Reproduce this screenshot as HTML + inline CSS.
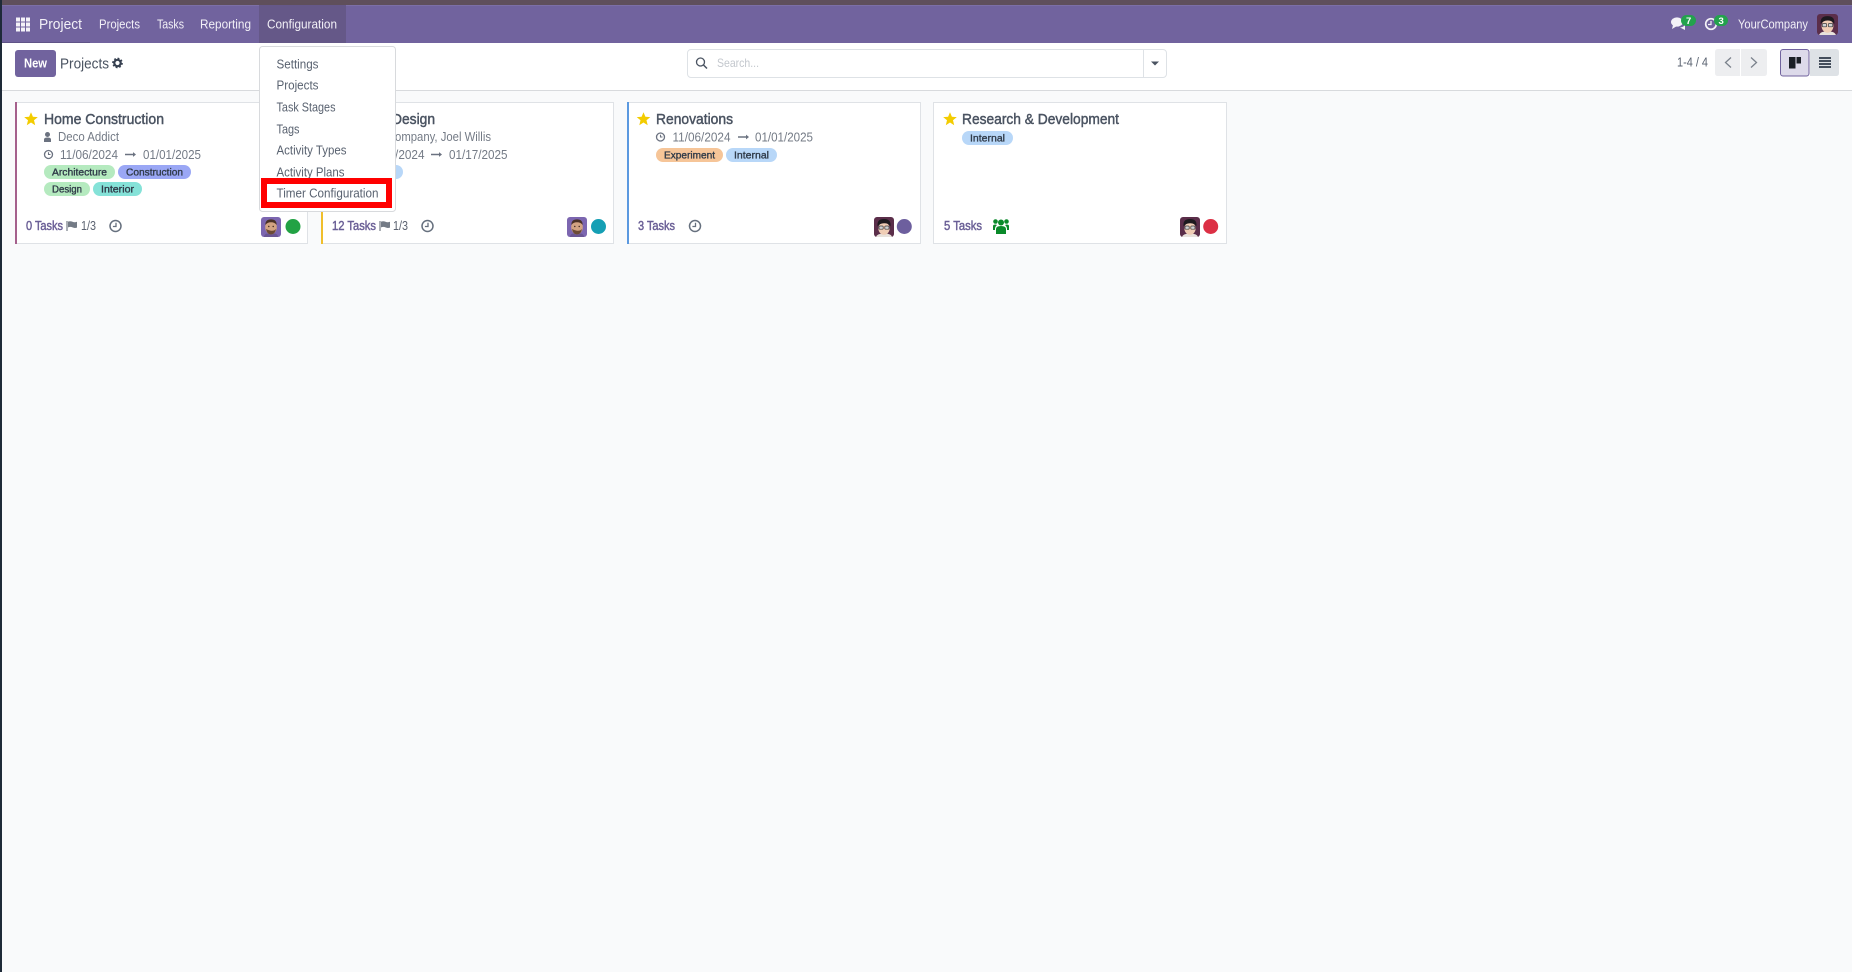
<!DOCTYPE html>
<html><head><meta charset="utf-8"><title>Project</title>
<style>
html,body{margin:0;padding:0;background:#f9fafb;width:1852px;height:972px;overflow:hidden}
svg{display:block}
text{font-family:"Liberation Sans",sans-serif;font-size:12.5px}
.nav{fill:#f2f0f7;font-size:13px}
.mi{fill:#596270;font-size:12.5px}
.t{fill:#4a5361;color:#4a5361;font-size:14.5px;stroke:currentColor;stroke-width:.45px}
.s{fill:#747b86;font-size:12.5px}
.tag{fill:#2f3a48;color:#2f3a48;font-size:10.5px;stroke:currentColor;stroke-width:.35px}
.f{fill:#6a5f96;color:#6a5f96;font-size:12.5px;stroke:currentColor;stroke-width:.45px}
</style></head><body>
<svg width="1852" height="972" viewBox="0 0 1852 972" xmlns="http://www.w3.org/2000/svg">
<defs>
<g id="star"><polygon points="0,-6.8 1.9,-2.2 6.8,-1.9 3,1.3 4.2,6.2 0,3.5 -4.2,6.2 -3,1.3 -6.8,-1.9 -1.9,-2.2" fill="#f3cc00"/></g>
<g id="clk"><circle cx="0" cy="0" r="4" fill="none" stroke="#6b7280" stroke-width="1.3"/><path d="M0-2.2V0H2" fill="none" stroke="#6b7280" stroke-width="1.1"/></g>
<g id="bigclk"><circle cx="0" cy="0" r="5.500" fill="none" stroke="#66707e" stroke-width="1.500"/><path d="M.5-3.200V.5H-2.600" fill="none" stroke="#66707e" stroke-width="1.300"/></g>
<g id="arr"><path d="M0 0H9" stroke="#6b7280" stroke-width="1.500"/><path d="M8 -2.400L11 0L8 2.400Z" fill="#6b7280"/></g>
<g id="flag"><path d="M0-5V5" stroke="#747b86" stroke-width="1.200"/><path d="M1-4.400Q3.500-5.200 5.500-4.200T10-4.200V1.600Q7.500 2.400 5.500 1.400T1 1.400Z" fill="#747b86"/></g>
<g id="av1"><rect width="20" height="20" rx="3" fill="#7c66b0"/><path d="M3 20Q3 16 10 16T17 20Z" fill="#6a5694"/><ellipse cx="10" cy="10" rx="5.800" ry="7.400" fill="#d3a482"/><path d="M4.400 8Q4.200 2.400 10 2.400T15.600 8Q14 5.200 10 5.200T4.400 8Z" fill="#4a3226"/><path d="M5 12Q6 17.500 10 17.500T15 12Q13 14.200 10 13.700T5 12Z" fill="#6b4a36"/><circle cx="7.800" cy="9.500" r=".7" fill="#33221a"/><circle cx="12.200" cy="9.500" r=".7" fill="#33221a"/></g>
<g id="av2"><rect width="20" height="20" rx="3" fill="#5b2e4a"/><path d="M2 20Q3 16.500 10 16.500T18 20Z" fill="#e8e2dc"/><ellipse cx="10" cy="11.500" rx="5.600" ry="6.300" fill="#f0cdb5"/><path d="M3.600 9.500Q2.500 2 10 2T16.400 9.500Q14.500 6 10 6.200T3.600 9.500Z" fill="#1d1a1f"/><rect x="5" y="9" width="4.200" height="3.200" rx="1" fill="#cfd2d4" stroke="#3a3a3a" stroke-width=".7"/><rect x="10.800" y="9" width="4.200" height="3.200" rx="1" fill="#cfd2d4" stroke="#3a3a3a" stroke-width=".7"/></g>
</defs>

<!-- backgrounds -->
<rect width="1852" height="972" fill="#f9fafb"/>
<rect width="1852" height="5" fill="#5f4f5b"/>
<rect y="5" width="1852" height="38" fill="#71639e"/>
<rect y="5" width="1852" height="1" fill="#7c6fa6"/>
<rect x="2" y="42" width="88" height="1" fill="#5f5387"/>
<rect x="259" y="5" width="87" height="38" fill="#655888"/>
<rect y="43" width="1852" height="47" fill="#fff"/>
<rect y="90" width="1852" height="1" fill="#d8dadd"/>
<rect width="2" height="972" fill="#1e2a38"/>

<!-- navbar -->
<g fill="#f4f2f8">
<rect x="16" y="17.500" width="4" height="4"/><rect x="21" y="17.500" width="4" height="4"/><rect x="26" y="17.500" width="4" height="4"/>
<rect x="16" y="22.500" width="4" height="4"/><rect x="21" y="22.500" width="4" height="4"/><rect x="26" y="22.500" width="4" height="4"/>
<rect x="16" y="27.500" width="4" height="4"/><rect x="21" y="27.500" width="4" height="4"/><rect x="26" y="27.500" width="4" height="4"/>
</g>
<text x="39" y="29" class="nav" style="font-size:14.500px" textLength="43" lengthAdjust="spacingAndGlyphs">Project</text>
<text x="99" y="28.500" class="nav" textLength="41" lengthAdjust="spacingAndGlyphs">Projects</text>
<text x="157" y="28.500" class="nav" textLength="27" lengthAdjust="spacingAndGlyphs">Tasks</text>
<text x="200" y="28.500" class="nav" textLength="51" lengthAdjust="spacingAndGlyphs">Reporting</text>
<text x="267" y="28.500" class="nav" textLength="70" lengthAdjust="spacingAndGlyphs">Configuration</text>

<!-- systray -->
<g fill="#f4f2f8">
<ellipse cx="1677" cy="22" rx="6" ry="4.600"/><path d="M1673 25L1672 29L1677 26Z"/>
<path d="M1680 27.500Q1684.500 27 1685 24L1685 28L1685 30L1682 28.500Z"/>
</g>
<rect x="1681" y="15" width="15" height="11" rx="5.500" fill="#23a24d"/>
<text x="1686" y="24" style="font-size:9.500px;font-weight:bold" fill="#fff">7</text>
<circle cx="1711" cy="24" r="5.300" fill="none" stroke="#f4f2f8" stroke-width="1.700"/><path d="M1711 21V24.500H1708" fill="none" stroke="#f4f2f8" stroke-width="1.200"/>
<rect x="1714" y="15" width="14" height="11" rx="5.500" fill="#23a24d"/>
<text x="1718.500" y="24" style="font-size:9.500px;font-weight:bold" fill="#fff">3</text>
<text x="1738" y="28.500" class="nav" textLength="70" lengthAdjust="spacingAndGlyphs" style="font-size:12.500px">YourCompany</text>
<use href="#av2" transform="translate(1817 14) scale(1.05)"/>

<!-- control panel -->
<rect x="15" y="50" width="41" height="27" rx="3" fill="#71639e"/>
<text x="24" y="67.500" fill="#fff" style="font-size:12.500px;font-weight:bold" textLength="23" lengthAdjust="spacingAndGlyphs">New</text>
<text x="60" y="68.500" fill="#4a5361" style="font-size:15px" textLength="49" lengthAdjust="spacingAndGlyphs">Projects</text>
<circle cx="117.500" cy="63" r="3.200" fill="none" stroke="#374151" stroke-width="2.200"/>
<circle cx="117.500" cy="63" r="4.600" fill="none" stroke="#374151" stroke-width="1.500" stroke-dasharray="1.800 1.800"/>

<!-- search -->
<rect x="687.500" y="49.500" width="479" height="28" rx="3.500" fill="#fff" stroke="#dee2e6"/>
<path d="M1143.500 50V77" stroke="#dee2e6"/>
<circle cx="700.500" cy="62" r="4" fill="none" stroke="#4a5361" stroke-width="1.300"/><path d="M703.500 65L707 68.500" stroke="#4a5361" stroke-width="1.500"/>
<text x="717" y="67" fill="#c3c7cd" style="font-size:12px" textLength="42" lengthAdjust="spacingAndGlyphs">Search...</text>
<path d="M1151 61.500H1159L1155 65.500Z" fill="#4a5361"/>

<!-- pager -->
<text x="1677" y="66.500" fill="#596270" style="font-size:12.500px" textLength="31" lengthAdjust="spacingAndGlyphs">1-4 / 4</text>
<path d="M1718 49H1740V76H1718Q1715 76 1715 73V52Q1715 49 1718 49Z" fill="#edeef0"/>
<path d="M1741 49H1764Q1767 49 1767 52V73Q1767 76 1764 76H1741Z" fill="#edeef0"/>
<path d="M1731 57.500L1725.500 62.500L1731 67.500" fill="none" stroke="#7b828c" stroke-width="1.300"/>
<path d="M1751 57.500L1756.500 62.500L1751 67.500" fill="none" stroke="#7b828c" stroke-width="1.300"/>
<rect x="1780.500" y="49.500" width="28.500" height="26.500" rx="2.500" fill="#dddaea" stroke="#71639e"/>
<rect x="1789" y="57" width="6.500" height="11.500" fill="#1b1f27"/><rect x="1796.500" y="57" width="4.500" height="6.500" fill="#1b1f27"/>
<path d="M1810 49H1836Q1839 49 1839 52V73Q1839 76 1836 76H1810Z" fill="#dee2e6"/>
<path d="M1819 58H1831M1819 61H1831M1819 64H1831M1819 67H1831" stroke="#2f3a48" stroke-width="1.800"/>

<!-- card 1 -->
<rect x="15.500" y="102.500" width="292" height="141" fill="#fff" stroke="#dfe2e6"/>
<rect x="15" y="102" width="2" height="142" fill="#a5608c"/>
<use href="#star" x="31" y="119"/>
<text x="44" y="124" class="t" textLength="120" lengthAdjust="spacingAndGlyphs">Home Construction</text>
<circle cx="47.500" cy="134.500" r="2.500" fill="#6b7280"/><path d="M44 142V139.500Q44 137.500 47.500 137.500T51 139.500V142Z" fill="#6b7280"/>
<text x="58" y="141" class="s" textLength="61" lengthAdjust="spacingAndGlyphs">Deco Addict</text>
<use href="#clk" x="48.500" y="154.500"/>
<text x="60" y="159" class="s" textLength="58" lengthAdjust="spacingAndGlyphs">11/06/2024</text>
<use href="#arr" x="125" y="154.500"/>
<text x="143" y="159" class="s" textLength="58" lengthAdjust="spacingAndGlyphs">01/01/2025</text>
<rect x="44" y="165" width="71" height="14" rx="7" fill="#b5eabf"/>
<text x="52" y="175.500" class="tag" textLength="55" lengthAdjust="spacingAndGlyphs">Architecture</text>
<rect x="118" y="165" width="73" height="14" rx="7" fill="#9aa7f5"/>
<text x="126" y="175.500" class="tag" textLength="57" lengthAdjust="spacingAndGlyphs">Construction</text>
<rect x="44" y="182" width="46" height="14" rx="7" fill="#b5eabf"/>
<text x="52" y="192.500" class="tag" textLength="30" lengthAdjust="spacingAndGlyphs">Design</text>
<rect x="93" y="182" width="49" height="14" rx="7" fill="#85e2d8"/>
<text x="101" y="192.500" class="tag" textLength="33" lengthAdjust="spacingAndGlyphs">Interior</text>
<text x="26" y="230" class="f" textLength="37" lengthAdjust="spacingAndGlyphs">0 Tasks</text>
<use href="#flag" x="67" y="226"/>
<text x="81" y="230" class="s" style="fill:#5b6270" textLength="15" lengthAdjust="spacingAndGlyphs">1/3</text>
<use href="#bigclk" x="115.500" y="226"/>
<use href="#av1" x="261" y="217"/>
<circle cx="293" cy="226.500" r="7.500" fill="#22a244"/>

<!-- card 2 -->
<rect x="321.500" y="102.500" width="292" height="141" fill="#fff" stroke="#dfe2e6"/>
<rect x="321" y="102" width="2" height="142" fill="#f0bf2c"/>
<text x="392" y="124" class="t" textLength="43" lengthAdjust="spacingAndGlyphs">Design</text>
<text x="364" y="141" class="s" textLength="127" lengthAdjust="spacingAndGlyphs">YourCompany, Joel Willis</text>
<text x="366.500" y="159" class="s" textLength="58" lengthAdjust="spacingAndGlyphs">11/06/2024</text>
<use href="#arr" x="431" y="154.500"/>
<text x="449" y="159" class="s" textLength="58.500" lengthAdjust="spacingAndGlyphs">01/17/2025</text>
<rect x="350" y="165" width="53" height="14" rx="7" fill="#b8d7f8"/>
<text x="332" y="230" class="f" textLength="44" lengthAdjust="spacingAndGlyphs">12 Tasks</text>
<use href="#flag" x="380" y="226"/>
<text x="393" y="230" class="s" style="fill:#5b6270" textLength="15" lengthAdjust="spacingAndGlyphs">1/3</text>
<use href="#bigclk" x="427.500" y="226"/>
<use href="#av1" x="567" y="217"/>
<circle cx="598.500" cy="226.500" r="7.500" fill="#159fb4"/>

<!-- card 3 -->
<rect x="627.500" y="102.500" width="293" height="141" fill="#fff" stroke="#dfe2e6"/>
<rect x="627" y="102" width="2" height="142" fill="#5b99e0"/>
<use href="#star" x="643.500" y="119"/>
<text x="656" y="124" class="t" textLength="77" lengthAdjust="spacingAndGlyphs">Renovations</text>
<use href="#clk" x="660.500" y="137"/>
<text x="672.500" y="141.500" class="s" textLength="58" lengthAdjust="spacingAndGlyphs">11/06/2024</text>
<use href="#arr" x="738" y="137"/>
<text x="755" y="141.500" class="s" textLength="58" lengthAdjust="spacingAndGlyphs">01/01/2025</text>
<rect x="656" y="148" width="67" height="14" rx="7" fill="#f6c598"/>
<text x="664" y="158.500" class="tag" textLength="51" lengthAdjust="spacingAndGlyphs">Experiment</text>
<rect x="726" y="148" width="51" height="14" rx="7" fill="#b8d7f8"/>
<text x="734" y="158.500" class="tag" textLength="35" lengthAdjust="spacingAndGlyphs">Internal</text>
<text x="638" y="230" class="f" textLength="37" lengthAdjust="spacingAndGlyphs">3 Tasks</text>
<use href="#bigclk" x="695" y="226"/>
<use href="#av2" x="874" y="217"/>
<circle cx="904.300" cy="226.500" r="7.500" fill="#6d5f9e"/>

<!-- card 4 -->
<rect x="933.500" y="102.500" width="293" height="141" fill="#fff" stroke="#dfe2e6"/>
<use href="#star" x="950" y="119"/>
<text x="962" y="124" class="t" textLength="157" lengthAdjust="spacingAndGlyphs">Research &amp; Development</text>
<rect x="962" y="131" width="51" height="14" rx="7" fill="#b8d7f8"/>
<text x="970" y="141.500" class="tag" textLength="35" lengthAdjust="spacingAndGlyphs">Internal</text>
<text x="944" y="230" class="f" textLength="38" lengthAdjust="spacingAndGlyphs">5 Tasks</text>
<g fill="#0a8a2a">
<circle cx="1001" cy="222.500" r="3"/><circle cx="995.500" cy="221.500" r="2.300"/><circle cx="1006.500" cy="221.500" r="2.300"/>
<path d="M996 234V229Q996 226 1001 226T1006 229V234Z"/>
<path d="M993 230V226Q993 224.500 995.500 224.500L997 225Q995 226.500 995 229V230Z"/>
<path d="M1009 230V226Q1009 224.500 1006.500 224.500L1005 225Q1007 226.500 1007 229V230Z"/>
</g>
<use href="#av2" x="1180" y="217"/>
<circle cx="1210.700" cy="226.500" r="7.500" fill="#dc3045"/>

<!-- dropdown -->
<rect x="259.500" y="46.500" width="136" height="165" rx="3" fill="#fff" stroke="#d8dadd"/>
<text x="276.500" y="68.500" class="mi" textLength="42" lengthAdjust="spacingAndGlyphs">Settings</text>
<text x="276.500" y="89.500" class="mi" textLength="42" lengthAdjust="spacingAndGlyphs">Projects</text>
<text x="276.500" y="111.500" class="mi" textLength="59" lengthAdjust="spacingAndGlyphs">Task Stages</text>
<text x="276.500" y="133.500" class="mi" textLength="23" lengthAdjust="spacingAndGlyphs">Tags</text>
<text x="276.500" y="154.500" class="mi" textLength="70" lengthAdjust="spacingAndGlyphs">Activity Types</text>
<text x="276.500" y="176.500" class="mi" textLength="68" lengthAdjust="spacingAndGlyphs">Activity Plans</text>
<text x="276.500" y="197.500" class="mi" textLength="102" lengthAdjust="spacingAndGlyphs">Timer Configuration</text>
<rect x="264" y="181" width="125" height="24" fill="none" stroke="#ff0000" stroke-width="6"/>
</svg>
</body></html>
